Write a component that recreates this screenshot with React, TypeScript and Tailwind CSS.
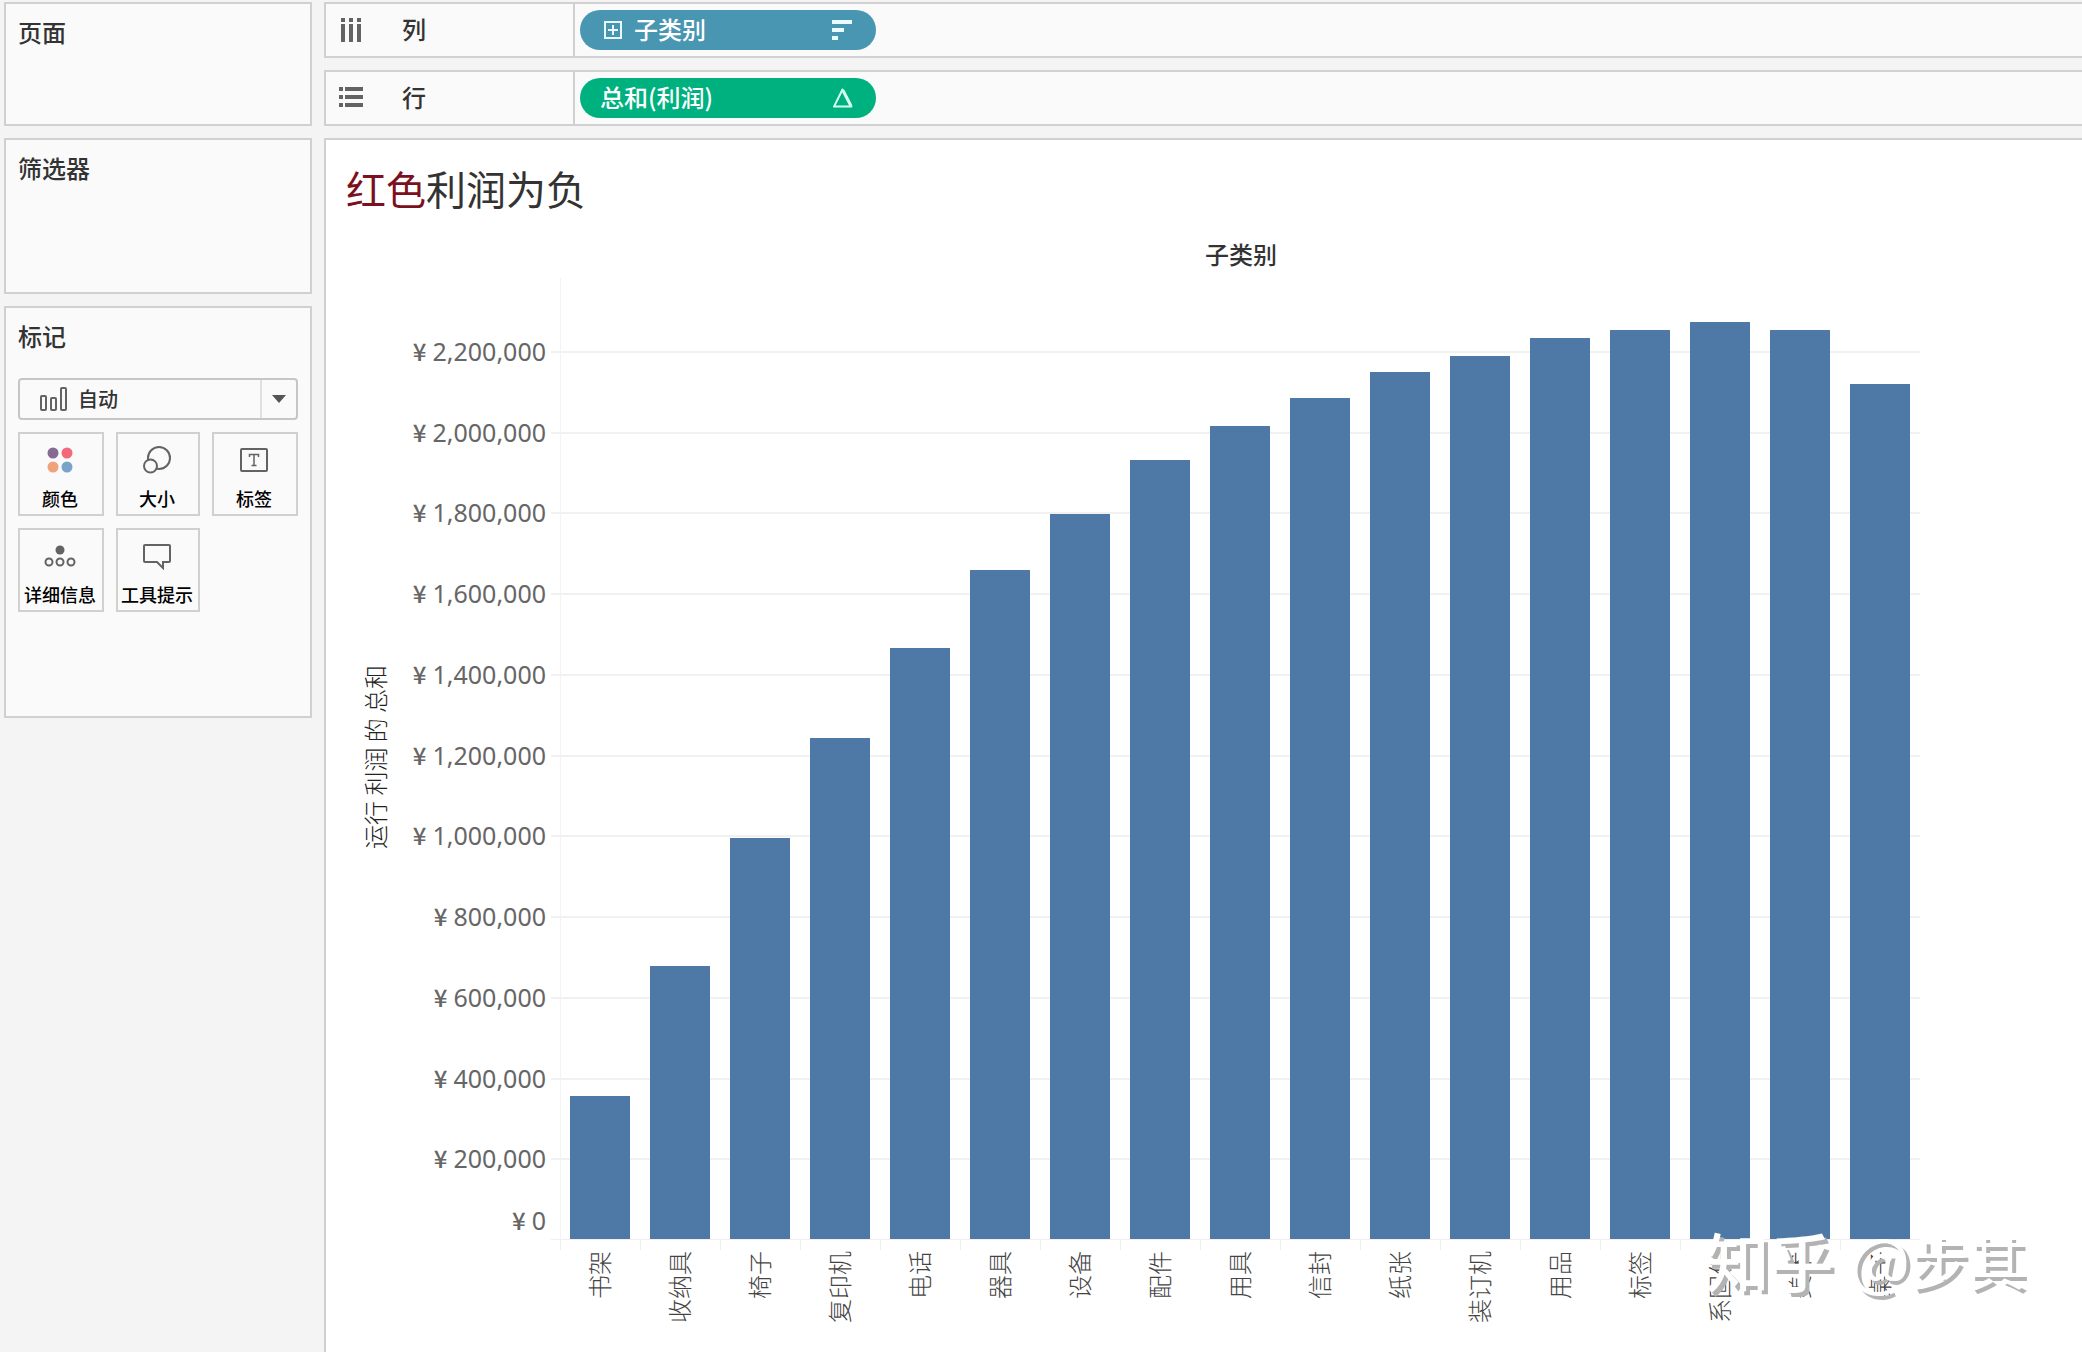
import React from "react";

type Bar = { name: string; value: number };

const AXIS_MAX = 2383300;

const bars: Bar[] = [
  { name: "书架", value: 354500 },
  { name: "收纳具", value: 678000 },
  { name: "椅子", value: 995500 },
  { name: "复印机", value: 1243500 },
  { name: "电话", value: 1466500 },
  { name: "器具", value: 1660000 },
  { name: "设备", value: 1798500 },
  { name: "配件", value: 1932500 },
  { name: "用具", value: 2016500 },
  { name: "信封", value: 2086000 },
  { name: "纸张", value: 2150500 },
  { name: "装订机", value: 2190000 },
  { name: "用品", value: 2234500 },
  { name: "标签", value: 2254500 },
  { name: "系固件", value: 2274000 },
  { name: "美术", value: 2254500 },
  { name: "桌子", value: 2120500 },
];

const ticks = [
  2200000, 2000000, 1800000, 1600000, 1400000, 1200000, 1000000, 800000,
  600000, 400000, 200000,
];

function ColumnsIcon() {
  return (
    <svg width="24" height="24" viewBox="0 0 24 24" fill="#636363" aria-hidden="true">
      {[2, 10, 18].map((x) => (
        <g key={x}>
          <rect x={x} y="0" width="4" height="4" />
          <rect x={x} y="6" width="4" height="18" />
        </g>
      ))}
    </svg>
  );
}

function RowsIcon() {
  return (
    <svg width="24" height="24" viewBox="0 0 24 24" fill="#636363" aria-hidden="true">
      {[1, 9, 17].map((y) => (
        <g key={y}>
          <rect x="0" y={y} width="4" height="4" />
          <rect x="6" y={y} width="18" height="4" />
        </g>
      ))}
    </svg>
  );
}

function ExpandIcon() {
  return (
    <svg width="18" height="18" viewBox="0 0 18 18" fill="none" stroke="#e9f8ff" strokeWidth="2" aria-hidden="true">
      <rect x="1" y="1" width="16" height="16" />
      <path d="M9 4v10M4 9h10" />
    </svg>
  );
}

function SortIcon() {
  return (
    <svg width="20" height="20" viewBox="0 0 20 20" fill="#e9fbff" aria-hidden="true">
      <rect width="20" height="4" />
      <rect y="8" width="12" height="4" />
      <rect y="16" width="6" height="4" />
    </svg>
  );
}

function DeltaIcon() {
  return (
    <svg width="22" height="20" viewBox="0 0 22 20" fill="none" stroke="#d6fff0" aria-hidden="true">
      <path d="M10.5 1.5 2 18.6h17.5z" strokeWidth="2" strokeLinejoin="round" />
      <path d="M11 2.5 19 18" strokeWidth="3" />
    </svg>
  );
}

function BarsIcon() {
  return (
    <svg width="28" height="24" viewBox="0 0 28 24" fill="none" stroke="#636363" strokeWidth="2" aria-hidden="true">
      <rect x="1" y="9" width="5" height="14" rx="1" />
      <rect x="11" y="11" width="5" height="12" rx="1" />
      <rect x="21" y="1" width="5" height="22" rx="1" />
    </svg>
  );
}

function ColorIcon() {
  return (
    <svg width="28" height="28" viewBox="0 0 28 28" aria-hidden="true">
      <circle cx="7" cy="7" r="5.500" fill="#866a94" />
      <circle cx="21" cy="7" r="5.500" fill="#f2697b" />
      <circle cx="7" cy="21" r="5.500" fill="#f0a27a" />
      <circle cx="21" cy="21" r="5.500" fill="#7ba3c9" />
    </svg>
  );
}

function SizeIcon() {
  return (
    <svg width="28" height="28" viewBox="0 0 28 28" fill="#fafafa" stroke="#636363" strokeWidth="2" aria-hidden="true">
      <circle cx="16" cy="12" r="11" />
      <circle cx="7.500" cy="20" r="6.500" />
    </svg>
  );
}

function LabelIcon() {
  return (
    <svg width="28" height="28" viewBox="0 0 28 28" fill="none" stroke="#636363" aria-hidden="true">
      <rect x="1" y="3" width="26" height="22" rx="1" strokeWidth="2" />
      <path d="M9.500 11V8.500h9V11M14 8.500v11M11.500 19.500h5" strokeWidth="1.500" />
    </svg>
  );
}

function DetailIcon() {
  return (
    <svg width="32" height="28" viewBox="0 0 32 28" fill="none" stroke="#636363" strokeWidth="2" aria-hidden="true">
      <circle cx="16" cy="8" r="4.500" fill="#636363" stroke="none" />
      <circle cx="5" cy="20" r="3.500" />
      <circle cx="16" cy="20" r="3.500" />
      <circle cx="27" cy="20" r="3.500" />
    </svg>
  );
}

function TooltipIcon() {
  return (
    <svg width="28" height="28" viewBox="0 0 28 28" fill="none" stroke="#636363" strokeWidth="2" aria-hidden="true">
      <path d="M2 3h24a1 1 0 0 1 1 1v15a1 1 0 0 1-1 1h-6v6l-6-6H2a1 1 0 0 1-1-1V4a1 1 0 0 1 1-1z" />
    </svg>
  );
}

const markButtons = [
  { label: "颜色", icon: <ColorIcon /> },
  { label: "大小", icon: <SizeIcon /> },
  { label: "标签", icon: <LabelIcon /> },
  { label: "详细信息", icon: <DetailIcon /> },
  { label: "工具提示", icon: <TooltipIcon /> },
];

function Card({ title, className, children }: { title: string; className: string; children?: React.ReactNode }) {
  return (
    <section className={`border-2 border-[#d0d0d0] bg-[#fafafa] px-3 pt-3 ${className}`}>
      <h2 className="text-2xl leading-8 font-medium text-[#333]">{title}</h2>
      {children}
    </section>
  );
}

function Shelf({ label, icon, children }: { label: string; icon: React.ReactNode; children: React.ReactNode }) {
  return (
    <section className="flex h-14 border-2 border-r-0 border-[#d0d0d0] bg-[#fafafa]">
      <div className="flex w-[249px] items-center gap-[39px] border-r-2 border-[#d0d0d0] pl-[13px]">
        {icon}
        <h2 className="pb-0.5 text-2xl leading-8 font-medium text-[#333]">{label}</h2>
      </div>
      <div className="flex flex-1 items-center pl-[5px]">{children}</div>
    </section>
  );
}

function Yuan() {
  return <span className="mr-1.5 font-['Noto_Sans_CJK_SC',sans-serif] text-2xl font-medium">¥</span>;
}

export default function App() {
  return (
    <div className="flex min-h-screen gap-3 overflow-hidden bg-[#f4f4f4] pt-0.5 pl-1 font-['Noto_Sans_CJK_SC',sans-serif]">
      <aside className="flex w-[308px] shrink-0 flex-col gap-3">
        <Card title="页面" className="h-[124px]" />
        <Card title="筛选器" className="h-[156px]" />
        <Card title="标记" className="h-[412px]">
          <div className="relative mt-[26px]">
            <select
              aria-label="标记类型"
              className="block h-[42px] w-full appearance-none rounded-sm border-2 border-[#c6c6c6] bg-[#fafafa] pl-[58px] text-xl font-medium text-[#333]"
            >
              <option>自动</option>
            </select>
            <span className="pointer-events-none absolute inset-y-0 left-[22px] flex items-center">
              <BarsIcon />
            </span>
            <span className="pointer-events-none absolute inset-y-0.5 right-0.5 flex w-9 items-center justify-center border-l-2 border-[#e0e0e0]">
              <svg width="14" height="8" viewBox="0 0 14 8" fill="#555" aria-hidden="true">
                <path d="M0 0h14L7 8z" />
              </svg>
            </span>
          </div>
          <div className="mt-3 grid grid-cols-[86fr_84fr_86fr] gap-3">
            {markButtons.map((b) => (
              <button
                key={b.label}
                type="button"
                className="flex h-[84px] flex-col items-center border-2 border-[#d0d0d0] bg-[#fafafa] pt-3 pr-0.5 whitespace-nowrap"
              >
                {b.icon}
                <span className="mt-2.5 text-lg leading-7 font-medium text-black">{b.label}</span>
              </button>
            ))}
          </div>
        </Card>
      </aside>

      <main className="flex min-w-0 flex-1 flex-col gap-3">
        <Shelf label="列" icon={<ColumnsIcon />}>
          <button
            type="button"
            className="flex h-10 w-74 items-center rounded-full bg-[#4996b2] pr-6 pl-6 text-2xl leading-8 font-medium text-white"
          >
            <ExpandIcon />
            <span className="ml-3 flex-1 pb-0.5 text-left">子类别</span>
            <SortIcon />
          </button>
        </Shelf>
        <Shelf label="行" icon={<RowsIcon />}>
          <button
            type="button"
            className="flex h-10 w-74 items-center rounded-full bg-[#00b180] pr-[22px] pl-5 text-2xl leading-8 font-medium text-white"
          >
            <span className="flex-1 pb-0.5 text-left">总和(利润)</span>
            <DeltaIcon />
          </button>
        </Shelf>

        <section className="relative flex-1 border-t-2 border-l-2 border-[#d0d0d0] bg-white pt-6 pl-5">
          <h1 className="text-[40px] leading-12 text-[#333]">
            <span className="text-[#7a1020]">红色</span>利润为负
          </h1>

          <div className="mt-[26px] grid w-fit grid-cols-[60px_154px_auto]">
            <h2 className="col-start-3 mb-2 pl-0.5 text-center text-2xl leading-8 font-medium text-[#333]">子类别</h2>

            <div className="col-start-1 flex items-center justify-center pr-0.5 pb-1">
              <span className="rotate-180 text-2xl leading-8 font-light whitespace-nowrap text-[#222] [text-orientation:sideways] [writing-mode:vertical-rl]">
                运行 利润 的 总和
              </span>
            </div>

            <div className="relative font-['Noto_Sans',sans-serif] text-[25px] leading-8 whitespace-nowrap text-[#666]">
              {ticks.map((t) => (
                <span
                  key={t}
                  className="absolute right-3.5 flex translate-y-1/2 items-baseline pb-0.5"
                  style={{ bottom: `${(t / AXIS_MAX) * 100}%` }}
                >
                  <Yuan />
                  {t.toLocaleString("en-US")}
                </span>
              ))}
              <span className="absolute right-3.5 bottom-1 flex items-baseline">
                <Yuan />0
              </span>
            </div>

            <div className="relative h-[962px] border-l border-[#f3f3f3]">
              {ticks.map((t) => (
                <div
                  key={t}
                  className="absolute right-0 -left-2.5 h-0.5 translate-y-1/2 bg-[#f1f1f1]"
                  style={{ bottom: `${(t / AXIS_MAX) * 100}%` }}
                />
              ))}
              <div className="absolute right-0 bottom-0 -left-2.5 h-px bg-[#efefef]" />
              <div className="relative -ml-px flex h-full items-end">
                {bars.map((b) => (
                  <div key={b.name} className="flex h-full w-20 items-end justify-center pb-px">
                    <div className="w-15 bg-[#4e79a7]" style={{ height: `${(b.value / AXIS_MAX) * 100}%` }} />
                  </div>
                ))}
              </div>
            </div>

            <div className="col-start-3 flex">
              {bars.map((b) => (
                <div key={b.name} className="flex w-20 flex-col pr-0.5">
                  <div className="mb-px h-2.5 border-l border-[#eee]" />
                  <span className="rotate-180 self-center text-2xl leading-8 font-light whitespace-nowrap text-[#444] [text-orientation:sideways] [writing-mode:vertical-rl]">
                    {b.name}
                  </span>
                </div>
              ))}
            </div>
          </div>

          <div className="pointer-events-none absolute right-14 bottom-13 flex items-center gap-4 leading-[80px] whitespace-nowrap text-white [text-shadow:4px_4px_0_#b3b3b3]">
            <span className="text-[64px] font-medium">知乎</span>
            <span className="text-[58px]">
              <span className="text-[64px]">@</span>步其
            </span>
          </div>
        </section>
      </main>
    </div>
  );
}
